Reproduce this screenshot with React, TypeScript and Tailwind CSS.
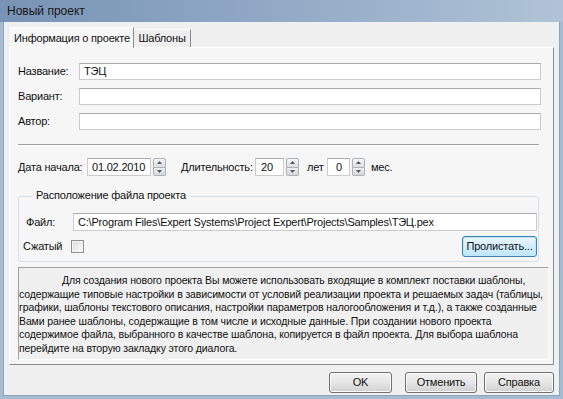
import React from "react";

function Spinner() {
  return (
    <div className="flex flex-col w-[13px] h-[18px] ml-[2px]">
      <div className="flex-1 flex items-center justify-center border border-[#a9b1ba] rounded-t-[2px] bg-gradient-to-b from-[#f6f6f6] to-[#dedede]">
        <svg width="5" height="3" viewBox="0 0 5 3"><path d="M0 3 L2.5 0 L5 3 Z" fill="#4a5a6e" /></svg>
      </div>
      <div className="flex-1 flex items-center justify-center border border-t-0 border-[#a9b1ba] rounded-b-[2px] bg-gradient-to-b from-[#f0f0f0] to-[#d6d6d6]">
        <svg width="5" height="3" viewBox="0 0 5 3"><path d="M0 0 L5 0 L2.5 3 Z" fill="#4a5a6e" /></svg>
      </div>
    </div>
  );
}

function Field({ label, value }: { label: string; value?: string }) {
  return (
    <div className="flex items-center h-[17px]">
      <div className="w-[61px]">{label}</div>
      <div className="w-[462px] h-[17px] bg-white border border-[#cccccc] border-t-[#ababab] flex items-center pl-[4px]">
        {value}
      </div>
    </div>
  );
}

function Btn({ children, w, focused }: { children: React.ReactNode; w: string; focused?: boolean }) {
  return (
    <div
      className={
        "h-[21px] flex items-center justify-center rounded-[3px] border " +
        w +
        (focused
          ? " border-[#3c7fb1] bg-gradient-to-b from-[#eaf6fd] to-[#bee6fd] shadow-[inset_0_0_0_1px_#c0e6fb]"
          : " border-[#707070] bg-gradient-to-b from-[#f2f2f2] via-[#e6e6e6] to-[#d0d0d0] shadow-[inset_0_0_0_1px_#fbfbfb]")
      }
    >
      {children}
    </div>
  );
}

export default function App() {
  return (
    <div className="w-[563px] h-[399px] flex flex-col bg-[#a6bad0] font-['Liberation_Sans',Arial,sans-serif] text-[11px] tracking-[-0.2px] text-[#111] overflow-hidden leading-none">
      <div className="h-[22px] shrink-0 flex items-center pl-[7px] text-[12px] tracking-normal text-[#151515] bg-gradient-to-r from-[#7893b5] via-[#92aac6] to-[#b0c3d6]">
        Новый проект
      </div>
      <div className="flex-1 mx-[3px] mb-[3px] bg-[#f0f0f0] flex flex-col px-[5px] pt-[5px] border border-[#8da3bb] border-t-0">
        {/* tabs */}
        <div className="h-[20px] flex items-end">
          <div className="relative z-10 -mb-px ml-[1px] w-[124px] h-[21px] bg-[#f7f7f7] border-t border-l border-white border-r border-r-[#8c8c8c] flex items-center justify-center">
            Информация о проекте
          </div>
          <div className="w-[57px] h-[18px] bg-[#eeeeee] border-t border-white border-r border-r-[#8c8c8c] flex items-center justify-center">
            Шаблоны
          </div>
        </div>
        {/* panel */}
        <div className="h-[318px] bg-[#f6f6f6] border border-t-white border-l-white border-r-[#8c8c8c] border-b-[#8c8c8c] flex flex-col pl-[8px] pt-[15px]">
          <div className="flex flex-col gap-[8px]">
            <Field label="Название:" value="ТЭЦ" />
            <Field label="Вариант:" />
            <Field label="Автор:" />
          </div>
          <div className="mt-[14px] w-[521px] border-t border-[#a0a0a0] border-b border-b-white" />
          <div className="mt-[12px] flex items-center h-[18px]">
            <div className="w-[69px]">Дата начала:</div>
            <div className="w-[64px] h-[18px] bg-white border border-[#cccccc] border-t-[#ababab] flex items-center pl-[4px]">01.02.2010</div>
            <Spinner />
            <div className="ml-[15px] w-[74px]">Длительность:</div>
            <div className="w-[29px] h-[18px] bg-white border border-[#cccccc] border-t-[#ababab] flex items-center pl-[5px]">20</div>
            <Spinner />
            <div className="ml-[8px] w-[20px]">лет</div>
            <div className="w-[23px] h-[18px] bg-white border border-[#cccccc] border-t-[#ababab] flex items-center pl-[8px]">0</div>
            <Spinner />
            <div className="ml-[6px]">мес.</div>
          </div>
          <fieldset className="mt-[14px] w-[521px] h-[72px] border border-[#d5dfe5] rounded-[3px] pl-[7px] pr-[1px]">
            <legend className="ml-[6px] px-[4px] h-[13px]">Расположение файла проекта</legend>
            <div className="mt-[10px] flex items-center h-[18px]">
              <div className="w-[47px]">Файл:</div>
              <div className="flex-1 h-[18px] bg-white border border-[#cccccc] border-t-[#ababab] flex items-center pl-[4px] whitespace-nowrap">
                C:\Program Files\Expert Systems\Project Expert\Projects\Samples\ТЭЦ.pex
              </div>
            </div>
            <div className="mt-[5px] flex items-center -ml-[3px]">
              <div className="w-[48px]">Сжатый</div>
              <div className="w-[13px] h-[13px] border border-[#8e8f8f] bg-gradient-to-br from-[#dcdcdc] to-[#fbfbfb] shadow-[inset_0_0_0_1px_#f4f4f4]" />
              <div className="flex-1" />
              <Btn w="w-[75px]" focused>Пролистать...</Btn>
            </div>
          </fieldset>
          <div className="mt-[5px] w-[531px] h-[93px] border border-t-[#a0a0a0] border-l-[#a0a0a0] border-r-white border-b-white bg-[#f0f0f0] pt-[6px] text-[10.5px] leading-[13.6px] text-[#111] whitespace-nowrap tracking-[-0.12px]">
            <div className="pl-[43px]">Для создания нового проекта Вы можете использовать входящие в комплект поставки шаблоны,</div>
            <div>содержащие типовые настройки в зависимости от условий реализации проекта и решаемых задач (таблицы,</div>
            <div>графики, шаблоны текстового описания, настройки параметров налогообложения и т.д.), а также созданные</div>
            <div>Вами ранее шаблоны, содержащие в том числе и исходные данные. При создании нового проекта</div>
            <div>содержимое файла, выбранного в качестве шаблона, копируется в файл проекта. Для выбора шаблона</div>
            <div>перейдите на вторую закладку этого диалога.</div>
          </div>
        </div>
        {/* buttons */}
        <div className="flex-1 flex items-start justify-end pt-[7px]">
          <Btn w="w-[63px]">OK</Btn>
          <div className="w-[13px]" />
          <Btn w="w-[72px]">Отменить</Btn>
          <div className="w-[7px]" />
          <Btn w="w-[70px]">Справка</Btn>
        </div>
      </div>
    </div>
  );
}
